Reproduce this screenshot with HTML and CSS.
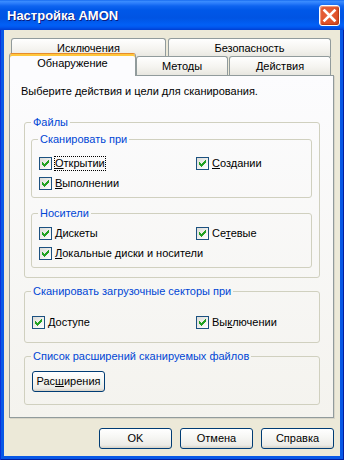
FILE: index.html
```html
<!DOCTYPE html>
<html lang="ru">
<head>
<meta charset="utf-8">
<title>Настройка AMON</title>
<link rel="stylesheet" href="styles.css">
</head>
<body>
<div class="window">
  <div class="titlebar">
    <span class="title">Настройка AMON</span>
    <span class="close"><svg width="19" height="19" viewBox="0 0 19 19"><path d="M4.5 4.5L14.5 14.5M14.5 4.5L4.5 14.5" stroke="#fff" stroke-width="2.6" stroke-linecap="square"/></svg></span>
  </div>
  <div class="client">
    <div class="tabs">
      <div class="tabrow row1">
        <div class="tab t-excl">Исключения</div>
        <div class="tab t-sec">Безопасность</div>
      </div>
      <div class="tabrow row2">
        <div class="tab active">Обнаружение</div>
        <div class="tab t-meth">Методы</div>
        <div class="tab t-act">Действия</div>
      </div>
    </div>
    <div class="panel">
      <p class="intro">Выберите действия и цели для сканирования.</p>

      <fieldset class="group top files">
        <legend>Файлы</legend>
        <fieldset class="group scan">
          <legend>Сканировать при</legend>
          <div class="checks">
            <label class="cb"><span class="cbox"><svg width="11" height="11" viewBox="0 0 11 11"><path fill="#21A121" d="M8 2h1v1H8zM7 3h2v1H7zM2 4h1v1H2zM6 4h3v1H6zM2 5h2v1H2zM5 5h3v1H5zM2 6h5v1H2zM3 7h3v1H3zM4 8h1v1H4z"/></svg></span><span class="lbl focus"><u>О</u>ткрытии</span></label>
            <label class="cb"><span class="cbox"><svg width="11" height="11" viewBox="0 0 11 11"><path fill="#21A121" d="M8 2h1v1H8zM7 3h2v1H7zM2 4h1v1H2zM6 4h3v1H6zM2 5h2v1H2zM5 5h3v1H5zM2 6h5v1H2zM3 7h3v1H3zM4 8h1v1H4z"/></svg></span><span class="lbl"><u>С</u>оздании</span></label>
            <label class="cb"><span class="cbox"><svg width="11" height="11" viewBox="0 0 11 11"><path fill="#21A121" d="M8 2h1v1H8zM7 3h2v1H7zM2 4h1v1H2zM6 4h3v1H6zM2 5h2v1H2zM5 5h3v1H5zM2 6h5v1H2zM3 7h3v1H3zM4 8h1v1H4z"/></svg></span><span class="lbl"><u>В</u>ыполнении</span></label>
          </div>
        </fieldset>
        <fieldset class="group media">
          <legend>Носители</legend>
          <div class="checks">
            <label class="cb"><span class="cbox"><svg width="11" height="11" viewBox="0 0 11 11"><path fill="#21A121" d="M8 2h1v1H8zM7 3h2v1H7zM2 4h1v1H2zM6 4h3v1H6zM2 5h2v1H2zM5 5h3v1H5zM2 6h5v1H2zM3 7h3v1H3zM4 8h1v1H4z"/></svg></span><span class="lbl"><u>Д</u>искеты</span></label>
            <label class="cb"><span class="cbox"><svg width="11" height="11" viewBox="0 0 11 11"><path fill="#21A121" d="M8 2h1v1H8zM7 3h2v1H7zM2 4h1v1H2zM6 4h3v1H6zM2 5h2v1H2zM5 5h3v1H5zM2 6h5v1H2zM3 7h3v1H3zM4 8h1v1H4z"/></svg></span><span class="lbl">Се<u>т</u>евые</span></label>
            <label class="cb full"><span class="cbox"><svg width="11" height="11" viewBox="0 0 11 11"><path fill="#21A121" d="M8 2h1v1H8zM7 3h2v1H7zM2 4h1v1H2zM6 4h3v1H6zM2 5h2v1H2zM5 5h3v1H5zM2 6h5v1H2zM3 7h3v1H3zM4 8h1v1H4z"/></svg></span><span class="lbl"><u>Л</u>окальные диски и носители</span></label>
          </div>
        </fieldset>
      </fieldset>

      <fieldset class="group top boot">
        <legend>Сканировать загрузочные секторы при</legend>
        <div class="checks wide">
          <label class="cb"><span class="cbox"><svg width="11" height="11" viewBox="0 0 11 11"><path fill="#21A121" d="M8 2h1v1H8zM7 3h2v1H7zM2 4h1v1H2zM6 4h3v1H6zM2 5h2v1H2zM5 5h3v1H5zM2 6h5v1H2zM3 7h3v1H3zM4 8h1v1H4z"/></svg></span><span class="lbl">Доступе</span></label>
          <label class="cb"><span class="cbox"><svg width="11" height="11" viewBox="0 0 11 11"><path fill="#21A121" d="M8 2h1v1H8zM7 3h2v1H7zM2 4h1v1H2zM6 4h3v1H6zM2 5h2v1H2zM5 5h3v1H5zM2 6h5v1H2zM3 7h3v1H3zM4 8h1v1H4z"/></svg></span><span class="lbl">Вы<u>к</u>лючении</span></label>
        </div>
      </fieldset>

      <fieldset class="group top ext">
        <legend>Список расширений сканируемых файлов</legend>
        <button class="btn ext-btn" type="button">Рас<u>ш</u>ирения</button>
      </fieldset>
    </div>
    <div class="buttons">
      <button class="btn" type="button">OK</button>
      <button class="btn" type="button">Отмена</button>
      <button class="btn" type="button">Справка</button>
    </div>
  </div>
</div>
</body>
</html>
```

FILE: styles.css
```css
* { box-sizing: border-box; }
html, body { margin: 0; padding: 0; }
body {
  font-family: "Liberation Sans", Arial, sans-serif;
  font-size: 11px;
  color: #000;
  background: #ECE9D8;
}

.window {
  width: 344px;
  height: 460px;
  display: flex;
  flex-direction: column;
  background: #0858E6;
  box-shadow: inset 1px 0 #0831D9, inset -1px 0 #001EA0, inset 0 -1px #001EA0;
}

.titlebar {
  flex: none;
  height: 30px;
  display: flex;
  align-items: center;
  justify-content: space-between;
  padding: 0 4px 0 7px;
  background: linear-gradient(to bottom,
    #0A5EEA 0, #3C8EFF 1px, #2E80FC 3px, #0E64F0 6px, #0058E8 10px,
    #0054E3 18px, #0160F6 25px, #0158F0 27px, #0048DC 29px, #003ED2 30px);
}
.title {
  color: #fff;
  font-weight: bold;
  font-size: 13px;
  line-height: 15px;
  text-shadow: 1px 1px #0A1C7E;
}
.close {
  width: 21px;
  height: 21px;
  border: 1px solid #fff;
  border-radius: 3px;
  background: radial-gradient(circle at 40% 40%, #E8643E 0, #E0532B 55%, #CB4420 100%);
  box-shadow: inset 1px 1px 1px #F2A58B, inset -1px -1px 1px #B83A16;
  display: flex;
}

.client {
  flex: 1;
  margin: 0 4px 4px;
  background: #ECE9D8;
  padding: 8px 6px 7px 5px;
  display: flex;
  flex-direction: column;
}

.tabrow { display: flex; padding-left: 2px; }
.row1 { height: 18px; gap: 2px; }
.row2 { height: 19px; }
.tab {
  height: 19px;
  border: 1px solid #919B9C;
  border-bottom: none;
  border-radius: 3px 3px 0 0;
  background: linear-gradient(#FFFFFF, #F5F4F0 55%, #E8E7E0);
  display: flex;
  align-items: center;
  justify-content: center;
  line-height: 13px;
}
.t-excl { width: 155px; }
.t-sec { width: 163px; }
.t-meth { width: 92px; }
.t-act { width: 102px; margin-left: 1px; }
.tab.active {
  width: 127px;
  height: 23px;
  margin-left: -2px;
  margin-top: -3px;
  position: relative;
  z-index: 1;
  background: #FCFCFE;
  border-top: 1px solid #E68B2C;
  box-shadow: inset 0 2px #FFC73C;
  align-items: flex-start;
  padding-top: 3px;
}

.panel {
  border: 1px solid #919B9C;
  background: linear-gradient(#FCFCFE, #F4F3EE);
  padding: 9px 13px 12px 11px;
  box-shadow: 1px 1px 0 #D8D5C8;
}
.intro { margin: 0 0 18px; line-height: 13px; }

fieldset.group {
  margin: 0;
  min-width: 0;
  border: 1px solid #D0D0BF;
  border-radius: 3px;
  padding: 0 7px 0 6px;
}
fieldset.group legend {
  padding: 0 2px;
  line-height: 13px;
  color: #0046D5;
}
.top { margin-left: 3px !important; }
.files { padding-top: 4px !important; padding-bottom: 9px !important; }
.scan { padding-top: 7px !important; padding-bottom: 4px !important; }
.media { margin-top: 9px !important; padding-top: 3px !important; padding-bottom: 4px !important; }
.boot { margin-top: 7px !important; padding-top: 14px !important; padding-bottom: 10px !important; }
.ext { margin-top: 7px !important; padding-top: 8px !important; padding-bottom: 12px !important; }

.checks {
  display: grid;
  grid-template-columns: 157px auto;
  grid-auto-rows: 20px;
  margin-left: 1px;
}
.checks.wide { grid-template-columns: 164px auto; }
.cb { display: flex; align-items: center; white-space: nowrap; }
.cb.full { grid-column: 1 / -1; }
.cbox {
  flex: none;
  width: 13px;
  height: 13px;
  border: 1px solid #1C5180;
  background: linear-gradient(135deg, #DCDCD7, #FFFFFF);
  display: flex;
}
.cbox svg { shape-rendering: crispEdges; }
.lbl {
  margin-left: 2px;
  border: 1px dotted transparent;
  line-height: 13px;
}
.lbl.focus { border-color: #000; }
u { text-decoration: underline; text-underline-offset: 1px; }

.btn {
  width: 73px;
  height: 21px;
  padding: 0;
  border: 1px solid #003C74;
  border-radius: 3px;
  background: linear-gradient(#FFFFFF, #F6F6F3 45%, #ECEBE6 85%, #D6D0C5);
  font: inherit;
  line-height: 13px;
  color: #000;
}
.ext-btn { margin-left: 1px; display: block; }

.buttons {
  display: flex;
  justify-content: flex-end;
  gap: 8px;
  margin-top: 10px;
}
```
